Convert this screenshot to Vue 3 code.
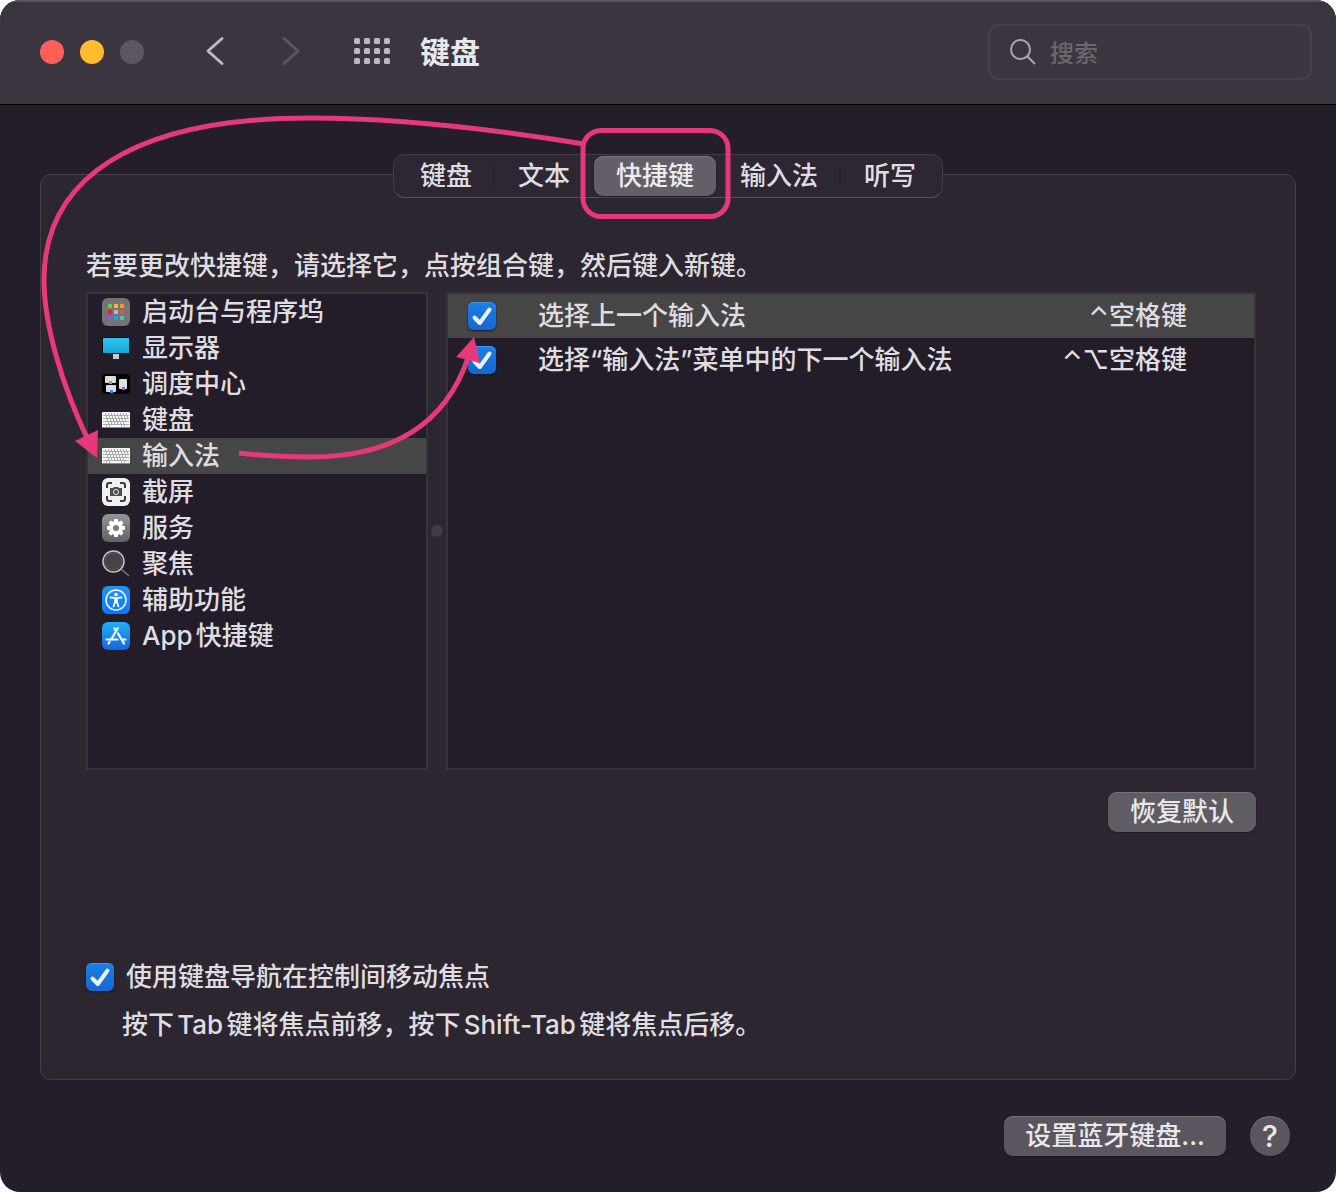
<script setup>
import { ref } from 'vue'

const tabs = ['键盘', '文本', '快捷键', '输入法', '听写']
const activeTab = ref('快捷键')

const categories = [
  { icon: 'launchpad', name: '启动台与程序坞' },
  { icon: 'display', name: '显示器' },
  { icon: 'mission', name: '调度中心' },
  { icon: 'keyboard', name: '键盘' },
  { icon: 'keyboard', name: '输入法' },
  { icon: 'screenshot', name: '截屏' },
  { icon: 'services', name: '服务' },
  { icon: 'spotlight', name: '聚焦' },
  { icon: 'access', name: '辅助功能' },
  { icon: 'appstore', name: 'App快捷键' },
]
const activeCategory = ref('输入法')

const shortcuts = ref([
  { id: 'prev', name: '选择上一个输入法', keys: '⌃空格键', on: true },
  { id: 'next', name: '选择“输入法”菜单中的下一个输入法', keys: '⌃⌥空格键', on: true },
])
const activeShortcut = ref('prev')
const keyboardNav = ref(true)
const query = ref('')

const padColors = ['#5fd24c', '#f5b929', '#f59a1d', '#e0251f', '#b9b7bb', '#f0504f', '#a44be0', '#1fa0f2', '#3ccfa6']
const teeth = [0, 45, 90, 135, 180, 225, 270, 315]
</script>

<template>
  <div class="window">
    <header class="titlebar">
      <div class="lights">
        <button class="light close" aria-label="关闭"></button>
        <button class="light minimize" aria-label="最小化"></button>
        <button class="light zoom" aria-label="缩放" disabled></button>
      </div>
      <nav class="nav">
        <button class="plain" aria-label="后退">
          <svg width="20" height="32" viewBox="0 0 20 32"><path d="M17 2.5L3 15L17 27.5" /></svg>
        </button>
        <button class="plain dim" aria-label="前进" disabled>
          <svg width="20" height="32" viewBox="0 0 20 32"><path d="M3 2.5L17 15L3 27.5" /></svg>
        </button>
        <button class="plain all" aria-label="显示全部">
          <svg width="36" height="28" viewBox="0 0 36 28">
            <template v-for="r in 3" :key="r">
              <rect v-for="c in 4" :key="c" :x="(c - 1) * 10" :y="(r - 1) * 10" width="6" height="6" rx="1.5" />
            </template>
          </svg>
        </button>
      </nav>
      <h1>键盘</h1>
      <label class="search">
        <svg width="28" height="28" viewBox="0 0 28 28"><circle cx="10.500" cy="11.500" r="9.5" /><path d="M17.500 18.500L24.500 25.500" /></svg>
        <input v-model="query" type="text" placeholder="搜索" aria-label="搜索" />
      </label>
    </header>

    <main class="content">
      <div class="tabs" role="tablist">
        <button
          v-for="tab in tabs"
          :key="tab"
          role="tab"
          :aria-selected="tab === activeTab"
          :class="{ active: tab === activeTab }"
          @click="activeTab = tab"
        >{{ tab }}</button>
      </div>

      <section class="panel">
        <p class="hint">若要更改快捷键，请选择它，点按组合键，然后键入新键。</p>

        <div class="panes">
          <ul class="list">
            <li v-for="item in categories" :key="item.name">
              <button :class="{ active: item.name === activeCategory }" @click="activeCategory = item.name">
                <svg class="icon" width="28" height="28" viewBox="0 0 28 28" aria-hidden="true">
                  <g v-if="item.icon === 'launchpad'">
                    <rect width="28" height="28" rx="6" fill="#757278" />
                    <rect v-for="(c, i) in padColors" :key="i" :x="6 + (i % 3) * 6" :y="6 + Math.floor(i / 3) * 6" width="4" height="4" rx="0.5" :fill="c" />
                  </g>
                  <g v-else-if="item.icon === 'display'">
                    <rect y="3" width="28" height="17" fill="#08080a" />
                    <rect x="1" y="4" width="26" height="15" fill="url(#screen)" />
                    <rect x="11" y="20" width="6" height="5" fill="#c9c9c9" />
                  </g>
                  <g v-else-if="item.icon === 'mission'">
                    <rect y="4" width="28" height="20" rx="4" fill="#000" />
                    <g fill="#dedde0">
                      <rect x="3" y="6" width="11" height="7" rx="1" />
                      <rect x="4" y="15" width="10" height="7" rx="1" />
                      <rect x="17" y="9" width="8" height="10" rx="1" />
                    </g>
                    <rect x="7" y="11" width="3" height="3" fill="#3fdc3c" />
                    <rect x="8" y="20" width="3" height="3" fill="#2196f3" />
                    <rect x="20" y="17" width="3" height="3" fill="#a650dc" />
                  </g>
                  <g v-else-if="item.icon === 'keyboard'">
                    <rect y="6" width="28" height="16" rx="1" fill="#f7f7f7" />
                    <g stroke="#aaa9ad" stroke-width="1" fill="none">
                      <path d="M1 9.500H27M1 12.500H27M1 15.500H27M1 18.500H27" />
                      <path d="M3 8H27" stroke-width="2" stroke-dasharray="1 2" />
                      <path d="M4 11H26" stroke-width="2" stroke-dasharray="1 2" />
                      <path d="M5 14H25" stroke-width="2" stroke-dasharray="1 2" />
                      <path d="M6 17H24" stroke-width="2" stroke-dasharray="1 2" />
                      <path d="M4.500 19V21M7.500 19V21M19.500 19V21M22.500 19V21" />
                    </g>
                    <path d="M0 21.500H28" stroke="#8d8b90" />
                  </g>
                  <g v-else-if="item.icon === 'screenshot'">
                    <rect width="28" height="28" rx="6" fill="#f0f0f0" />
                    <path d="M5 10V7Q5 5 7 5H10M18 5H21Q23 5 23 7V10M23 18V21Q23 23 21 23H18M10 23H7Q5 23 5 21V18" fill="none" stroke="#3d3d3f" stroke-width="2" />
                    <path d="M8 10H11L12 9H16L17 10H20V18H8Z" fill="#4d4d4f" />
                    <circle cx="14" cy="14" r="2.5" fill="none" stroke="#e8e8e8" stroke-width="1" />
                  </g>
                  <g v-else-if="item.icon === 'services'">
                    <rect width="28" height="28" rx="6" fill="url(#gray)" />
                    <rect v-for="a in teeth" :key="a" x="12" y="5" width="4" height="5" rx="1" fill="#fff" :transform="`rotate(${a} 14 14)`" />
                    <circle cx="14" cy="14" r="5" fill="none" stroke="#fff" stroke-width="4" />
                  </g>
                  <g v-else-if="item.icon === 'spotlight'">
                    <path d="M19 19L27 26" stroke="#77757a" stroke-width="1.5" />
                    <circle cx="11.500" cy="11.500" r="10.5" fill="#39363d" stroke="#c4c2c6" stroke-width="1.5" />
                    <circle cx="11.500" cy="11.500" r="8.5" fill="#454248" stroke="#5d5a60" stroke-width="1" />
                  </g>
                  <g v-else-if="item.icon === 'access'">
                    <rect width="28" height="28" rx="6" fill="url(#blue)" />
                    <circle cx="14" cy="14" r="10" fill="none" stroke="#fff" stroke-width="1.5" />
                    <circle cx="14" cy="8.500" r="1.8" fill="#fff" />
                    <path d="M8.500 11.500L13 12H15L19.500 11.500M13.200 12V15.500L11.500 20.500M14.800 12V15.500L16.500 20.500" fill="none" stroke="#fff" stroke-width="1.8" stroke-linecap="round" />
                  </g>
                  <g v-else>
                    <rect width="28" height="28" rx="6" fill="url(#store)" />
                    <path d="M16 6L9 17.500M12.500 6.500L14 9M16 11.500L22 21.500M4.500 17.500H15.500M19.500 17.500H23.500M7.500 20L6.500 21.500" fill="none" stroke="#fff" stroke-width="2.2" stroke-linecap="round" />
                  </g>
                </svg>
                <span>{{ item.name }}</span>
              </button>
            </li>
          </ul>

          <div class="splitter"><i></i></div>

          <div class="list">
            <table>
              <tbody>
                <tr v-for="s in shortcuts" :key="s.id" :class="{ active: s.id === activeShortcut }" @click="activeShortcut = s.id">
                  <td class="tick">
                    <span class="check">
                      <input :id="s.id" v-model="s.on" type="checkbox" />
                      <svg v-if="s.on" viewBox="0 0 28 28"><path d="M6.500 15.500L11.800 21L21.500 7.500" /></svg>
                    </span>
                  </td>
                  <td><label :for="s.id">{{ s.name }}</label></td>
                  <td class="keys">{{ s.keys }}</td>
                </tr>
              </tbody>
            </table>
          </div>
        </div>

        <div class="actions"><button class="push">恢复默认</button></div>

        <div class="focus">
          <span class="check">
            <input id="keyboard-nav" v-model="keyboardNav" type="checkbox" />
            <svg v-if="keyboardNav" viewBox="0 0 28 28"><path d="M6.500 15.500L11.800 21L21.500 7.500" /></svg>
          </span>
          <label for="keyboard-nav">使用键盘导航在控制间移动焦点</label>
        </div>
        <p class="note">按下Tab键将焦点前移，按下Shift-Tab键将焦点后移。</p>
      </section>

      <footer class="footer">
        <button class="push">设置蓝牙键盘...</button>
        <button class="help" aria-label="帮助">?</button>
      </footer>
    </main>

    <!-- Guide: from the tab to the category, then to its check box -->
    <svg class="guide" width="760" height="500" viewBox="0 0 760 500" aria-hidden="true">
      <defs>
        <linearGradient id="screen" x2="0" y2="1"><stop stop-color="#2bc8f3" /><stop offset="1" stop-color="#1ba6d2" /></linearGradient>
        <linearGradient id="gray" x2="0" y2="1"><stop stop-color="#949396" /><stop offset="1" stop-color="#626164" /></linearGradient>
        <linearGradient id="blue" x2="0" y2="1"><stop stop-color="#1f93ff" /><stop offset="1" stop-color="#0a78fb" /></linearGradient>
        <linearGradient id="store" x2="0" y2="1"><stop stop-color="#1fb0f7" /><stop offset="1" stop-color="#1764dd" /></linearGradient>
      </defs>
      <g fill="none" stroke="#e6397b" stroke-width="5">
        <rect x="583" y="130.500" width="145" height="86" rx="18" />
        <path d="M584 144C480 127 385 118 310 118C130 118 44 180 44 280C44 325 62 385 88 440" />
        <path d="M239 453C264 456 287 457 310 457C370 457 440 440 468 358" />
      </g>
      <path d="M75 441L98 430L97 458ZM474 337L456 357L480 363Z" fill="#e6397b" />
    </svg>
  </div>
</template>

<style>
body {
  margin: 0;
  background: #fff;
}
</style>

<style scoped>
.window {
  position: relative;
  overflow: hidden;
  border-radius: 20px;
  background: #241e2a;
  color: #dfdde0;
  font-family: Inter, "Noto Sans CJK SC", sans-serif;
  font-size: 26px;
  font-weight: 500;
  line-height: 36px;
  text-autospace: normal;
}
button,
input {
  font: inherit;
  color: inherit;
  margin: 0;
  padding: 0;
  border: 0;
  background: none;
}
.titlebar {
  display: flex;
  align-items: center;
  height: 104px;
  padding: 0 24px 0 40px;
  background: #3b353f;
  border-bottom: 1px solid #000;
  box-shadow: inset 0 2px #5a555e;
}
.lights {
  display: flex;
  gap: 16px;
}
.light {
  width: 24px;
  height: 24px;
  border-radius: 50%;
}
.close { background: #ff5f57; }
.minimize { background: #febc2e; }
.zoom { background: #5c5661; }
.nav {
  display: flex;
  align-items: center;
  gap: 56px;
  margin: 0 30px 0 61px;
}
.plain {
  display: flex;
  color: #bcb8bf;
}
.plain path {
  fill: none;
  stroke: currentColor;
  stroke-width: 3;
  stroke-linecap: round;
  stroke-linejoin: round;
}
.plain rect { fill: currentColor; }
.dim { color: #5c5661; }
.all { margin-left: -3px; }
h1 {
  margin: 0;
  font-size: 30px;
  line-height: 40px;
  font-weight: 700;
  color: #e9e8ea;
}
.search {
  display: flex;
  align-items: center;
  gap: 12px;
  box-sizing: border-box;
  width: 324px;
  height: 56px;
  margin-left: auto;
  padding: 0 18px 0 20px;
  border: 2px solid #474249;
  border-radius: 11px;
}
.search svg {
  flex: none;
  fill: none;
  stroke: #aaa6ad;
  stroke-width: 2;
  stroke-linecap: round;
}
.search input {
  width: 100%;
  min-width: 0;
  padding-top: 3px;
  font-size: 24px;
  outline: none;
}
.search input::placeholder {
  color: #6b676e;
  opacity: 1;
}
.content {
  padding: 49px 40px 36px;
}
.tabs {
  position: relative;
  z-index: 1;
  display: flex;
  align-items: center;
  box-sizing: border-box;
  width: fit-content;
  height: 44px;
  margin: 0 auto -24px;
  padding: 0 3px;
  border: 1px solid #413c46;
  border-bottom-color: #57525c;
  border-radius: 12px;
  background: #2d2733;
}
.tabs button {
  position: relative;
  height: 40px;
  padding: 0 23px;
  border-radius: 9px;
}
.tabs .active {
  margin: 0 1px;
  padding: 0 22px;
  background: #635e68;
  box-shadow: inset 0 1px #7c7780, 0 1px 2px #1c1721;
  color: #ecebed;
}
.tabs button:first-child::after,
.tabs button:nth-child(4)::after {
  content: "";
  position: absolute;
  top: 8px;
  right: 0;
  width: 2px;
  height: 24px;
  background: #26212b;
}
.panel {
  padding: 73px 39px 36px 45px;
  border: 1px solid #443f49;
  border-radius: 11px;
  background: #2c2630;
}
.hint {
  margin: 0 0 8px;
}
.panes {
  display: grid;
  grid-template-columns: 342px 18px 1fr;
  min-height: 478px;
}
.list {
  margin: 0;
  padding: 0;
  border: 2px solid #363436;
  background: #231d29;
  list-style: none;
}
.list button {
  display: flex;
  align-items: center;
  gap: 12px;
  width: 100%;
  height: 36px;
  padding: 0 14px;
  text-align: left;
}
.list .active { background: #464646; }
.icon { flex: none; }
.splitter {
  display: flex;
  align-items: center;
  justify-content: center;
}
.splitter i {
  width: 12px;
  height: 12px;
  border-radius: 50%;
  background: #413c45;
}
table {
  width: 100%;
  border-collapse: collapse;
}
td {
  height: 44px;
  padding: 0;
}
.tick {
  width: 90px;
}
.tick .check { margin-left: 20px; }
.keys {
  padding-right: 67px;
  text-align: right;
}
.check {
  display: grid;
  width: 28px;
  height: 28px;
}
.check input {
  grid-area: 1 / 1;
  appearance: none;
  border-radius: 6px;
  background: #5c5661;
}
.check input:checked {
  background: linear-gradient(#1b7ee8, #1468cf);
  box-shadow: inset 0 1px #4596ec, 0 1px 2px #1a1520;
}
.check svg {
  grid-area: 1 / 1;
  z-index: 0;
  pointer-events: none;
  fill: none;
  stroke: #e9f2fd;
  stroke-width: 4;
  stroke-linecap: round;
  stroke-linejoin: round;
}
.actions {
  display: flex;
  justify-content: flex-end;
  margin: 22px 0 127px;
}
.push {
  min-width: 148px;
  height: 40px;
  padding: 0 21px;
  border-radius: 9px;
  background: #605c63;
  box-shadow: inset 0 1px #77737a, 0 1px 2px #1c1721;
  color: #e9e8ea;
}
.focus {
  display: flex;
  align-items: center;
  gap: 12px;
}
.note {
  margin: 12px 0 0 36px;
}
.footer {
  display: flex;
  justify-content: flex-end;
  gap: 24px;
  margin-top: 36px;
  padding-right: 6px;
}
.footer button {
  background: #5b5560;
}
.help {
  width: 40px;
  height: 40px;
  border-radius: 50%;
  box-shadow: inset 0 1px #736e78, 0 1px 2px #1c1721;
  color: #e9e8ea;
  font-size: 30px;
}
.guide {
  position: absolute;
  z-index: 2;
  top: 0;
  left: 0;
  pointer-events: none;
}
</style>
